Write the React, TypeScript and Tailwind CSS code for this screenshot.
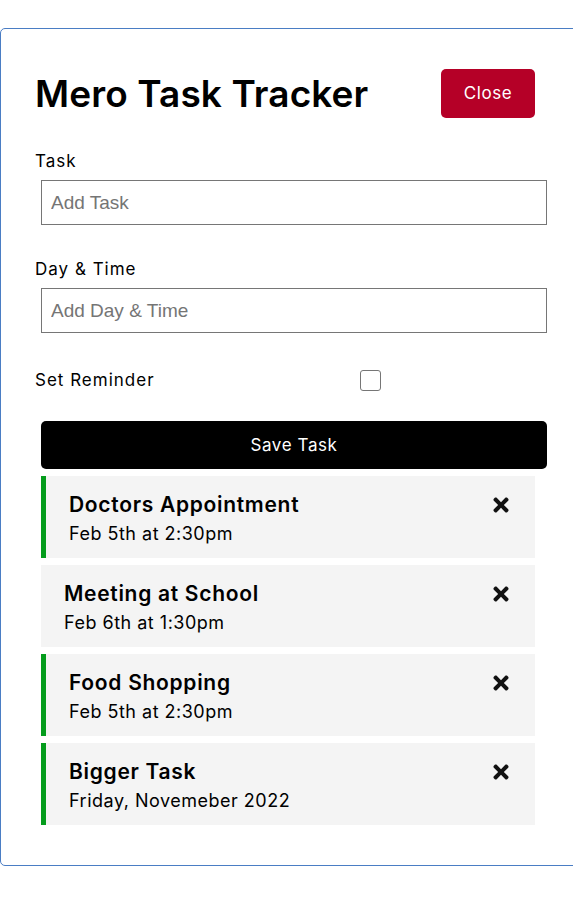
import React, { useState } from 'react'
import { FaTimes } from 'react-icons/fa'

type Task = {
    id: number
    text: string
    day: string
    reminder: boolean
}

const initialTasks: Task[] = [
    { id: 1, text: 'Doctors Appointment', day: 'Feb 5th at 2:30pm', reminder: true },
    { id: 2, text: 'Meeting at School', day: 'Feb 6th at 1:30pm', reminder: false },
    { id: 3, text: 'Food Shopping', day: 'Feb 5th at 2:30pm', reminder: true },
    { id: 4, text: 'Bigger Task', day: 'Friday, Novemeber 2022', reminder: true },
]

const font = "font-['Inter',sans-serif]"

const TaskItem = ({ task, onDelete }: { task: Task; onDelete: (id: number) => void }) => {
    return (
        <div
            className={`bg-[#f4f4f4] pl-[23px] pr-[23px] pt-[15px] pb-[9px] h-[82px] ${task.reminder ? 'border-l-[5px] border-[#049c1c]' : ''}`}
        >
            <div className="flex items-center justify-between h-[28px]">
                <h3 className="text-[21px] font-semibold text-black tracking-[0.7px]">{task.text}</h3>
                <FaTimes size={22} className="text-[#111] -mt-[1px]" onClick={() => onDelete(task.id)} />
            </div>
            <p className="text-[18px] leading-[30px] text-black tracking-[0.5px]">{task.day}</p>
        </div>
    )
}

const App = () => {
    const [tasks, setTasks] = useState<Task[]>(initialTasks)

    return (
        <div className={`w-[573px] h-[911px] overflow-hidden bg-white ${font}`}>
            <div className="mt-[28px] w-[640px] border border-[#4a7dc4] rounded-[5px] pl-[34px] pt-[40px] pb-[40px]">
                <div className="w-[500px]">
                    <header className="flex items-center justify-between h-[49px]">
                        <h1 className="text-[37px] font-semibold text-black tracking-[0.1px]">Mero Task Tracker</h1>
                        <button className="w-[94px] h-[49px] bg-[#b50027] rounded-[5px] text-white text-[17px] tracking-[0.6px]">Close</button>
                    </header>

                    <form className="mt-[30px]" onSubmit={(e) => e.preventDefault()}>
                        <label className="block text-[17px] leading-[26px] text-black tracking-[1px]">Task</label>
                        <input
                            type="text"
                            placeholder="Add Task"
                            className="block mt-[6px] ml-[6px] w-[506px] h-[45px] border border-[#767676] px-[9px] text-[19px] font-['Liberation_Sans',sans-serif] placeholder:text-[#757575] outline-none"
                        />

                        <label className="block mt-[31px] text-[17px] leading-[26px] text-black tracking-[1px]">Day &amp; Time</label>
                        <input
                            type="text"
                            placeholder="Add Day & Time"
                            className="block mt-[6px] ml-[6px] w-[506px] h-[45px] border border-[#767676] px-[9px] text-[19px] font-['Liberation_Sans',sans-serif] placeholder:text-[#757575] outline-none"
                        />

                        <div className="flex items-center mt-[36px] h-[22px]">
                            <label className="w-[325px] text-[17px] text-black tracking-[1px] pt-[1px]">Set Reminder</label>
                            <span className="w-[21px] h-[21px] border border-[#767676] rounded-[3px] bg-white"></span>
                        </div>

                        <button
                            type="submit"
                            className="block mt-[30px] ml-[6px] w-[506px] h-[48px] bg-black text-white rounded-[5px] text-[17px] tracking-[0.6px] pt-[1px]"
                        >
                            Save Task
                        </button>
                    </form>

                    <div className="mt-[7px] ml-[6px] w-[494px] flex flex-col gap-[7px]">
                        {tasks.map((task) => (
                            <TaskItem key={task.id} task={task} onDelete={(id) => setTasks(tasks.filter((t) => t.id !== id))} />
                        ))}
                    </div>
                </div>
            </div>
        </div>
    )
}

export default App
